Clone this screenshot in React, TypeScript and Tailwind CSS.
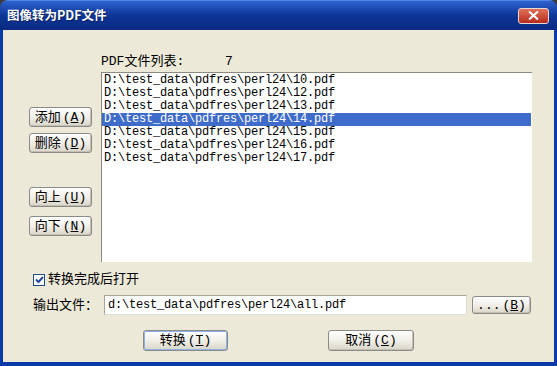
import React from 'react';

const files = [
  'D:\\test_data\\pdfres\\perl24\\10.pdf',
  'D:\\test_data\\pdfres\\perl24\\12.pdf',
  'D:\\test_data\\pdfres\\perl24\\13.pdf',
  'D:\\test_data\\pdfres\\perl24\\14.pdf',
  'D:\\test_data\\pdfres\\perl24\\15.pdf',
  'D:\\test_data\\pdfres\\perl24\\16.pdf',
  'D:\\test_data\\pdfres\\perl24\\17.pdf',
];

const ui = "font-['Liberation_Mono','Noto_Sans_CJK_SC',monospace]";

interface XpButtonProps {
  label: string;
  hotkey: string;
  className?: string;
  isDefault?: boolean;
}

const XpButton: React.FC<XpButtonProps> = ({ label, hotkey, className = '', isDefault }) => (
  <button
    className={`flex items-center justify-center rounded-[3px] border border-[#8a8a86] bg-gradient-to-b from-[#ffffff] via-[#f1efe8] to-[#d9d5c9] text-[13px] leading-none text-black shadow-[inset_-1px_-1px_0_#c4bfb2] ${
      isDefault ? 'outline outline-1 outline-[#8fb2e8] -outline-offset-2' : ''
    } ${className}`}
  >
    <span>{label}</span>
    <span className="ml-[2px]">
      (<span className="underline underline-offset-[1px]">{hotkey}</span>)
    </span>
  </button>
);

const App: React.FC = () => {
  return (
    <div className={`h-[366px] w-[557px] bg-[#3c3c3c] ${ui}`}>
      <div className="flex h-full w-full flex-col overflow-hidden rounded-t-[8px]">
        {/* title bar */}
        <div className="flex h-[30px] shrink-0 items-center justify-between border-t border-[#4f86e8] bg-gradient-to-b from-[#2f62cf] via-[#0c3596] to-[#0a2a82] pl-[7px] pr-[8px]">
          <span className="text-[12.5px] font-bold leading-none text-white [text-shadow:1px_1px_0_#0a1f5c] font-['Noto_Sans_CJK_SC',sans-serif]">
            图像转为PDF文件
          </span>
          <div className="flex h-[16px] w-[31px] items-center justify-center rounded-[3px] border border-[#e8d8d8] bg-gradient-to-b from-[#e0705a] to-[#b8281a]">
            <svg width="11" height="9" viewBox="0 0 11 9">
              <path d="M1 0.5 L10 8.5 M10 0.5 L1 8.5" stroke="white" strokeWidth="2" />
            </svg>
          </div>
        </div>

        {/* body */}
        <div className="flex flex-1 flex-col border-x-[3px] border-b-[4px] border-x-[#0b3aa8] border-b-[#0b3aa8] bg-[#ece9d8] pr-[1px]">
          <div className="flex">
            {/* side buttons */}
            <div className="flex w-[98px] flex-col pl-[26px] pt-[77px]">
              <XpButton label="添加" hotkey="A" className="h-[20px] w-[63px]" />
              <XpButton label="删除" hotkey="D" className="mt-[6px] h-[20px] w-[63px]" />
              <XpButton label="向上" hotkey="U" className="mt-[34px] h-[20px] w-[63px]" />
              <XpButton label="向下" hotkey="N" className="mt-[9px] h-[20px] w-[63px]" />
            </div>

            {/* list */}
            <div className="flex flex-col pt-[24px]">
              <div className="flex h-[18px] items-start text-[13px] leading-[16px] text-black">
                <span className="w-[124px]">PDF文件列表:</span>
                <span>7</span>
              </div>
              <div className="h-[190px] w-[431px] border-l border-t border-[#8c8a80] border-b-[#f4f3ee] border-r-[#f4f3ee] bg-white pt-[1px]">
                {files.map((f, i) => (
                  <div
                    key={f}
                    className={`h-[13px] w-[429px] pl-[2px] text-[12px] leading-[13px] tracking-[-0.2px] ${
                      i === 3 ? 'bg-[#3f6ccb] text-white' : 'text-black'
                    }`}
                  >
                    {f}
                  </div>
                ))}
              </div>
            </div>
          </div>

          {/* checkbox */}
          <div className="mt-[11px] flex items-center pl-[30px]">
            <div className="flex h-[12px] w-[12px] items-center justify-center border border-[#1c5180] bg-white">
              <svg width="9" height="8" viewBox="0 0 9 8">
                <path d="M1 3.5 L3.5 6 L8 1" stroke="#2146a8" strokeWidth="2" fill="none" />
              </svg>
            </div>
            <span className="ml-[3px] text-[13px] leading-none text-black">转换完成后打开</span>
          </div>

          {/* output file */}
          <div className="mt-[9px] flex items-center pl-[30px]">
            <span className="w-[71px] text-[13px] leading-none text-black">输出文件：</span>
            <div className="flex h-[20px] w-[363px] items-center border border-[#e2dfd2] border-l-[#a8a598] border-t-[#a8a598] bg-white pl-[3px] text-[12px] tracking-[-0.2px] text-black">
              d:\test_data\pdfres\perl24\all.pdf
            </div>
            <XpButton label="..." hotkey="B" className="ml-[5px] h-[18px] w-[59px]" />
          </div>

          {/* actions */}
          <div className="mt-[15px] flex pl-[140px]">
            <XpButton label="转换" hotkey="T" isDefault className="h-[21px] w-[85px]" />
            <XpButton label="取消" hotkey="C" className="ml-[100px] h-[21px] w-[86px]" />
          </div>
        </div>
      </div>
    </div>
  );
};

export default App;
